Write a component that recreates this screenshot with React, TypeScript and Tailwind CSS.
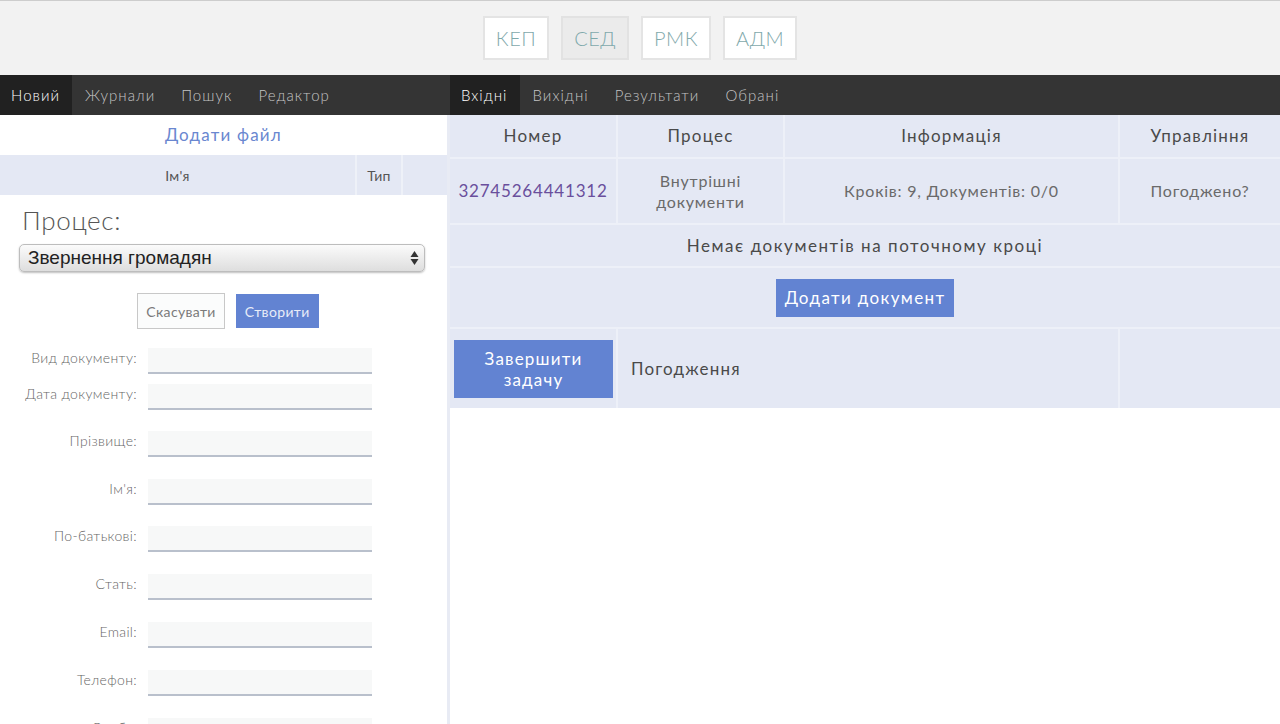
import React from 'react';

const topButtons = [
  { label: 'КЕП', active: false },
  { label: 'СЕД', active: true },
  { label: 'РМК', active: false },
  { label: 'АДМ', active: false },
];

const leftTabs = ['Новий', 'Журнали', 'Пошук', 'Редактор'];
const rightTabs = ['Вхідні', 'Вихідні', 'Результати', 'Обрані'];

const fields = [
  { label: 'Вид документу:', gap: 'mt-0' },
  { label: 'Дата документу:', gap: 'mt-[10px]' },
  { label: 'Прізвище:', gap: 'mt-[21px]' },
  { label: "Ім'я:", gap: 'mt-[22px]' },
  { label: 'По-батькові:', gap: 'mt-[21px]' },
  { label: 'Стать:', gap: 'mt-[22px]' },
  { label: 'Email:', gap: 'mt-[22px]' },
  { label: 'Телефон:', gap: 'mt-[22px]' },
  { label: 'Особа:', gap: 'mt-[22px]' },
];

const font = { fontFamily: 'Lato, "Open Sans", sans-serif' };

const NavTabs: React.FC<{ tabs: string[] }> = ({ tabs }) => (
  <div className="flex h-full">
    {tabs.map((t, i) => (
      <div
        key={t}
        className={
          i === 0
            ? 'flex items-center pl-[11px] pr-[12px] bg-[#212121] text-white'
            : 'flex items-center px-[13px] text-[#c4c4c4]'
        }
      >
        {t}
      </div>
    ))}
  </div>
);

export default function App() {
  return (
    <div className="w-[1280px] h-[724px] overflow-hidden bg-white text-[#555]" style={font}>
      {/* top switcher */}
      <div className="h-[75px] bg-[#f2f2f2] border-t border-[#cdcdcd] flex items-center justify-center gap-[12px]">
        {topButtons.map((b) => (
          <div
            key={b.label}
            className={`h-[44px] px-[11px] flex items-center border-2 text-[20px] font-light tracking-wide text-[#7fa9ab] ${
              b.active ? 'bg-[#ebebeb] border-[#e2e2e2]' : 'bg-white border-[#e4e4e4]'
            }`}
          >
            {b.label}
          </div>
        ))}
      </div>

      {/* nav */}
      <div className="h-10 bg-[#343434] flex text-[15px] font-light tracking-[0.07em]">
        <div className="w-[450px]">
          <NavTabs tabs={leftTabs} />
        </div>
        <NavTabs tabs={rightTabs} />
      </div>

      <div className="flex h-[609px]">
        {/* left panel */}
        <div className="w-[450px] shrink-0 border-r-[3px] border-[#e8ebf4]">
          <div className="h-10 flex items-center justify-center text-[17px] text-[#6a87d0] tracking-[0.07em]">
            Додати файл
          </div>
          <div className="h-10 bg-[#e4e8f4] grid grid-cols-[357px_46px_1fr] text-[14px] text-[#555] tracking-wide">
            <div className="flex items-center justify-center border-r-2 border-[#eef1f8]">Ім'я</div>
            <div className="flex items-center justify-center border-r-2 border-[#eef1f8]">Тип</div>
            <div />
          </div>

          <div className="pl-[22px] pt-[9px] text-[26px] font-light text-[#555] tracking-wide leading-[32px]">
            Процес:
          </div>
          <div className="ml-[19px] mr-[22px] mt-[8px] h-[28px] rounded-[5px] border border-[#bdbdbd] bg-gradient-to-b from-[#fbfbfb] to-[#dedede] shadow-[0_1px_2px_rgba(0,0,0,0.25)] flex items-center justify-between pl-[8px] pr-[5px]">
            <span className="text-[19px] text-[#222]" style={{ fontFamily: '"Liberation Sans", Arial, sans-serif' }}>
              Звернення громадян
            </span>
            <svg width="9" height="16" viewBox="0 0 9 16">
              <path d="M4.5 1 L8.5 7 L0.5 7 Z" fill="#333" />
              <path d="M4.5 15 L8.5 9 L0.5 9 Z" fill="#333" />
            </svg>
          </div>

          <div className="flex justify-center gap-[11px] mt-[21px] pl-[9px] text-[14px] tracking-wide">
            <div className="h-[36px] px-[8px] flex items-center border border-[#c8c8c8] bg-[#fbfcfc] text-[#7a7a7a]">
              Скасувати
            </div>
            <div className="h-[34px] mt-px px-[9px] flex items-center bg-[#6283d2] text-[#e8ecf8]">Створити</div>
          </div>

          <div className="mt-[19px]">
            {fields.map((f) => (
              <div key={f.label} className={`flex items-start ${f.gap}`}>
                <div className="w-[137px] text-right text-[14px] leading-[20px] font-light text-[#666] tracking-wide">
                  {f.label}
                </div>
                <div className="ml-[11px] w-[224px] h-[26px] bg-[#f7f8f8] border-b-2 border-[#b9c0cc]" />
              </div>
            ))}
          </div>
        </div>

        {/* right panel */}
        <div className="flex-1">
          <table className="w-full border-collapse bg-[#e4e8f4] text-[#555] tracking-[0.05em]">
            <colgroup>
              <col className="w-[167px]" />
              <col className="w-[167px]" />
              <col className="w-[335px]" />
              <col />
            </colgroup>
            <tbody>
              <tr className="h-[43px] text-[17px] text-[#4a4a4a] tracking-[0.07em] border-b-2 border-[#edf0f8]">
                <td className="text-center border-r-2 border-[#edf0f8]">Номер</td>
                <td className="text-center border-r-2 border-[#edf0f8]">Процес</td>
                <td className="text-center border-r-2 border-[#edf0f8]">Інформація</td>
                <td className="text-center">Управління</td>
              </tr>
              <tr className="h-[66px] text-[16px] border-b-2 border-[#edf0f8]">
                <td className="text-center text-[17px] text-[#6a4f9c] border-r-2 border-[#edf0f8]">32745264441312</td>
                <td className="text-center text-[#6a6a6a] leading-[21px] border-r-2 border-[#edf0f8]">
                  Внутрішні
                  <br />
                  документи
                </td>
                <td className="text-center text-[#6a6a6a] border-r-2 border-[#edf0f8]">Кроків: 9, Документів: 0/0</td>
                <td className="text-center text-[#6a6a6a]">Погоджено?</td>
              </tr>
              <tr className="h-[43px] text-[17px] text-[#4a4a4a] tracking-[0.09em] border-b-2 border-[#edf0f8]">
                <td colSpan={4} className="text-center">
                  Немає документів на поточному кроці
                </td>
              </tr>
              <tr className="h-[61px] border-b-2 border-[#edf0f8]">
                <td colSpan={4}>
                  <div className="flex justify-center">
                    <div className="h-[38px] px-[9px] flex items-center bg-[#6283d2] text-[17px] tracking-[0.08em] text-white">
                      Додати документ
                    </div>
                  </div>
                </td>
              </tr>
              <tr className="h-[80px]">
                <td className="border-r-2 border-[#edf0f8] pl-[4px]">
                  <div className="w-[159px] h-[58px] bg-[#6283d2] text-white text-[17px] tracking-[0.07em] leading-[21px] flex items-center justify-center text-center">
                    Завершити
                    <br />
                    задачу
                  </div>
                </td>
                <td colSpan={2} className="pl-[13px] text-[17px] tracking-[0.07em] text-[#4a4a4a] border-r-2 border-[#edf0f8]">
                  Погодження
                </td>
                <td />
              </tr>
            </tbody>
          </table>
        </div>
      </div>
    </div>
  );
}
